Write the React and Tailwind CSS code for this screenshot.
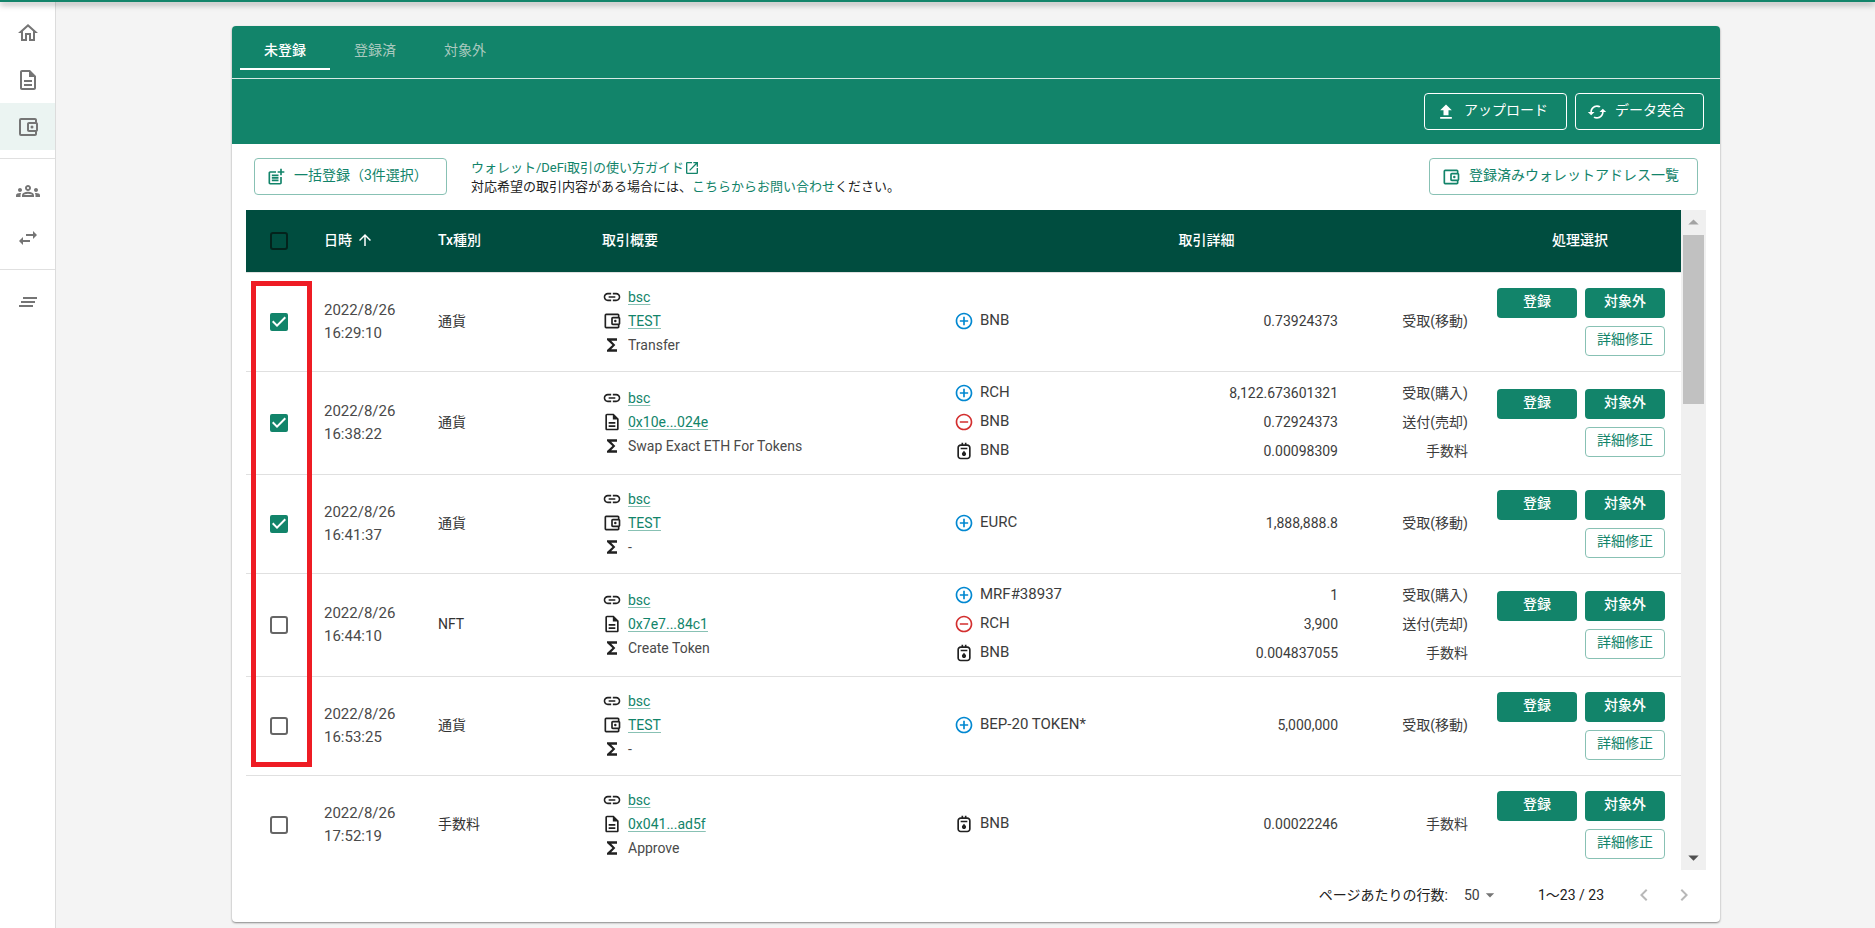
import { MdOutlineHome, MdOutlineDescription, MdOutlineAccountBalanceWallet, MdOutlineGroups, MdSwapHoriz, MdClearAll, MdPostAdd, MdUpload, MdCached, MdOpenInNew, MdLink, MdFunctions, MdAddCircleOutline, MdRemoveCircleOutline, MdOutlineGasMeter, MdKeyboardArrowLeft, MdKeyboardArrowRight, MdArrowDropDown, MdArrowDropUp, MdArrowUpward, MdCheckBox } from "react-icons/md";

const NAV = [
  [
    { label: "ホーム", Icon: MdOutlineHome },
    { label: "レポート", Icon: MdOutlineDescription },
    { label: "ウォレット", Icon: MdOutlineAccountBalanceWallet, active: true },
  ],
  [
    { label: "メンバー", Icon: MdOutlineGroups },
    { label: "取引", Icon: MdSwapHoriz },
  ],
  [{ label: "メニュー", Icon: MdClearAll }],
];

const ROWS = [
  { time: "16:29:10", type: "通貨", checked: true, wallet: true, address: "TEST", fn: "Transfer",
    details: [["in", "BNB", "0.73924373", "受取(移動)"]] },
  { time: "16:38:22", type: "通貨", checked: true, address: "0x10e...024e", fn: "Swap Exact ETH For Tokens",
    details: [["in", "RCH", "8,122.673601321", "受取(購入)"], ["out", "BNB", "0.72924373", "送付(売却)"], ["fee", "BNB", "0.00098309", "手数料"]] },
  { time: "16:41:37", type: "通貨", checked: true, wallet: true, address: "TEST", fn: "-",
    details: [["in", "EURC", "1,888,888.8", "受取(移動)"]] },
  { time: "16:44:10", type: "NFT", address: "0x7e7...84c1", fn: "Create Token",
    details: [["in", "MRF#38937", "1", "受取(購入)"], ["out", "RCH", "3,900", "送付(売却)"], ["fee", "BNB", "0.004837055", "手数料"]] },
  { time: "16:53:25", type: "通貨", wallet: true, address: "TEST", fn: "-",
    details: [["in", "BEP-20 TOKEN*", "5,000,000", "受取(移動)"]] },
  { time: "17:52:19", type: "手数料", address: "0x041...ad5f", fn: "Approve",
    details: [["fee", "BNB", "0.00022246", "手数料"]] },
];

const LINK = "text-[#12846a] underline decoration-[#88c1b4] underline-offset-2";

function DetailIcon({ kind }) {
  if (kind === "in") return <MdAddCircleOutline className="size-5 text-[#0288d1]" />;
  if (kind === "out") return <MdRemoveCircleOutline className="size-5 text-[#d32f2f]" />;
  return <MdOutlineGasMeter className="size-5 text-[#212121]" />;
}

function CheckBox({ label, checked, header }) {
  return (
    <label className="relative mx-auto flex size-6 items-center justify-center">
      <input
        type="checkbox"
        aria-label={label}
        defaultChecked={checked}
        className={
          "peer size-[18px] appearance-none rounded-[3px] border-2 checked:border-transparent " +
          (header ? "border-[#03231c]" : "border-[#666666]")
        }
      />
      <MdCheckBox className="pointer-events-none absolute inset-0 hidden size-6 text-[#12846a] peer-checked:block" />
    </label>
  );
}

function Row({ row, index }) {
  const AddressIcon = row.wallet ? MdOutlineAccountBalanceWallet : MdOutlineDescription;
  return (
    <tr className="border-b border-[#e0e0e0] last:border-b-0">
      <td className="p-0">
        <CheckBox label={`取引 ${index + 1} を選択`} checked={row.checked} />
      </td>
      <td className="pl-3 text-[15px] leading-[23px] text-[#4a4a4a]">
        2022/8/26
        <br />
        {row.time}
      </td>
      <td className="pb-0.5 pl-3 text-[#333333]">{row.type}</td>
      <td className="pb-0.5 pl-3">
        <div className="grid grid-cols-[20px_1fr] items-center gap-x-1.5 leading-6">
          <MdLink className="size-5" />
          <span><a href="#bsc" className={LINK}>bsc</a></span>
          <AddressIcon className="size-5" />
          <span><a href="#address" className={LINK}>{row.address}</a></span>
          <MdFunctions className="size-5" />
          <span className="text-[#4a4a4a]">{row.fn}</span>
        </div>
      </td>
      <td className="pt-[7px] pr-[11px] pb-2 pl-3 text-[#3c3c3c]">
        {row.details.map(([kind, name, amount, action], i) => (
          <div key={i} className="flex h-[29px] items-center">
            <DetailIcon kind={kind} />
            <span className="ml-1.5 flex-1 text-[15px]">{name}</span>
            <span className="text-right">{amount}</span>
            <span className="w-[130px] text-right">{action}</span>
          </div>
        ))}
      </td>
      <td className="py-[15px] pr-4">
        <div className="ml-auto grid w-42 grid-cols-2 gap-2">
          <button type="button" className="h-[30px] rounded bg-[#12846a] pb-1 font-medium text-white">登録</button>
          <button type="button" className="h-[30px] rounded bg-[#12846a] pb-1 font-medium text-white">対象外</button>
          <button type="button" className="col-start-2 h-[30px] rounded border border-[#88c1b4] pb-1 text-[#12846a]">詳細修正</button>
        </div>
      </td>
    </tr>
  );
}

function OutlineButton({ Icon, children, light }) {
  return (
    <button
      type="button"
      className={
        "flex h-[37px] items-center gap-2 rounded border pr-[18px] pl-[11px] " +
        (light ? "border-white text-white" : "border-[#88c1b4] text-[#12846a]")
      }
    >
      <Icon className="size-5" />
      <span className="pb-1">{children}</span>
    </button>
  );
}

export default function App() {
  return (
    <div className="flex h-screen flex-col overflow-hidden bg-[#f4f4f4] font-['Roboto','Noto_Sans_CJK_JP',sans-serif] text-sm text-[#212121]">
      <header className="relative z-10 h-0.5 shrink-0 bg-[#12846a] shadow-[0_2px_6px_rgba(0,0,0,0.6)]" />
      <div className="flex min-h-0 flex-1">
        <nav aria-label="メイン" className="w-14 shrink-0 border-r border-[#dcdcdc] bg-white pt-[7px]">
          {NAV.map((group, g) => (
            <div key={g} className="border-b border-[#e0e0e0] py-2 first:pt-0 last:border-b-0">
              {group.map(({ label, Icon, active }) => (
                <a key={label} href="#nav" aria-label={label} className={"flex h-[47px] items-center justify-center text-[#757575] " + (active ? "bg-[#ebf4f2]" : "")}>
                  <Icon className="size-6" />
                </a>
              ))}
            </div>
          ))}
        </nav>

        <main className="min-w-0 flex-1 pt-6 pl-[21px]">
          <section className="mx-auto w-[1488px] max-w-full rounded bg-white shadow-[0_1px_2px_rgba(0,0,0,0.45)]">
            <div className="rounded-t bg-[#12846a] text-white">
              <div role="tablist" className="flex h-[53px] border-b border-[#d8e9e5] px-2">
                <button type="button" role="tab" aria-selected="true" className="mb-2 w-[90px] border-b-2 border-white pt-1.5 font-medium">未登録</button>
                <button type="button" role="tab" aria-selected="false" className="mb-2 w-[90px] border-b-2 border-transparent pt-1.5 text-[#a9c9bf]">登録済</button>
                <button type="button" role="tab" aria-selected="false" className="mb-2 w-[90px] border-b-2 border-transparent pt-1.5 text-[#a9c9bf]">対象外</button>
              </div>
              <div className="flex h-[65px] items-center justify-end gap-2 px-4">
                <OutlineButton Icon={MdUpload} light>アップロード</OutlineButton>
                <OutlineButton Icon={MdCached} light>データ突合</OutlineButton>
              </div>
            </div>

            <div className="flex h-[66px] items-start px-[22px] pt-3.5">
              <OutlineButton Icon={MdPostAdd}>一括登録（3件選択）</OutlineButton>
              <div className="ml-6 flex-1 text-[13px] leading-[19px]">
                <a href="#guide" className="flex items-center text-[#12846a]">
                  ウォレット/DeFi取引の使い方ガイド
                  <MdOpenInNew className="size-4" />
                </a>
                <p>
                  対応希望の取引内容がある場合には、<a href="#contact" className="text-[#12846a]">こちらからお問い合わせ</a>ください。
                </p>
              </div>
              <OutlineButton Icon={MdOutlineAccountBalanceWallet}>登録済みウォレットアドレス一覧</OutlineButton>
            </div>

            <div className="flex h-[660px] px-3.5">
              <div className="relative min-w-0 flex-1 overflow-hidden">
                <table className="w-full table-fixed border-collapse">
                  <colgroup>
                    <col className="w-[66px]" />
                    <col className="w-[114px]" />
                    <col className="w-[164px]" />
                    <col className="w-[352px]" />
                    <col />
                    <col className="w-[202px]" />
                  </colgroup>
                  <thead>
                    <tr className="h-[62px] border-b border-[#e0e0e0] bg-[#004d3f] text-left text-white">
                      <th scope="col"><CheckBox label="すべて選択" header /></th>
                      <th scope="col" className="pb-0.5 pl-3 font-medium"><span className="flex items-center gap-1">日時 <MdArrowUpward className="size-[18px]" /></span></th>
                      <th scope="col" className="pb-0.5 pl-3 font-medium">Tx種別</th>
                      <th scope="col" className="pb-0.5 pl-3 font-medium">取引概要</th>
                      <th scope="col" className="pr-2 pb-0.5 text-center font-medium">取引詳細</th>
                      <th scope="col" className="pb-0.5 text-center font-medium">処理選択</th>
                    </tr>
                  </thead>
                  <tbody>
                    {ROWS.map((row, i) => <Row key={row.time} row={row} index={i} />)}
                  </tbody>
                </table>
                <div className="pointer-events-none absolute top-[71px] left-[5px] h-[486px] w-[61px] border-5 border-[#ee1c24]" />
              </div>
              <div className="flex w-[25px] shrink-0 flex-col items-center bg-[#f0f0f0]">
                <MdArrowDropUp className="size-[25px] shrink-0 text-[#a3a3a3]" />
                <div className="h-[169px] w-[21px] bg-[#c1c1c1]" />
                <MdArrowDropDown className="mt-auto size-[25px] shrink-0 text-[#505050]" />
              </div>
            </div>

            <footer className="flex h-[52px] items-center justify-end pr-6 pb-0.5">
              <label htmlFor="page-size">ページあたりの行数:</label>
              <span className="relative ml-4 flex items-center">
                <select id="page-size" defaultValue="50" className="w-9 appearance-none bg-transparent text-[#3c3c3c]">
                  <option>50</option>
                </select>
                <MdArrowDropDown className="pointer-events-none absolute right-0 size-5 text-[#757575]" />
              </span>
              <span className="ml-[38px]">1～23 / 23</span>
              <button type="button" aria-label="前のページ" className="ml-7 text-[#b8b8b8]"><MdKeyboardArrowLeft className="size-6" /></button>
              <button type="button" aria-label="次のページ" className="ml-4 text-[#b8b8b8]"><MdKeyboardArrowRight className="size-6" /></button>
            </footer>
          </section>
        </main>
      </div>
    </div>
  );
}
